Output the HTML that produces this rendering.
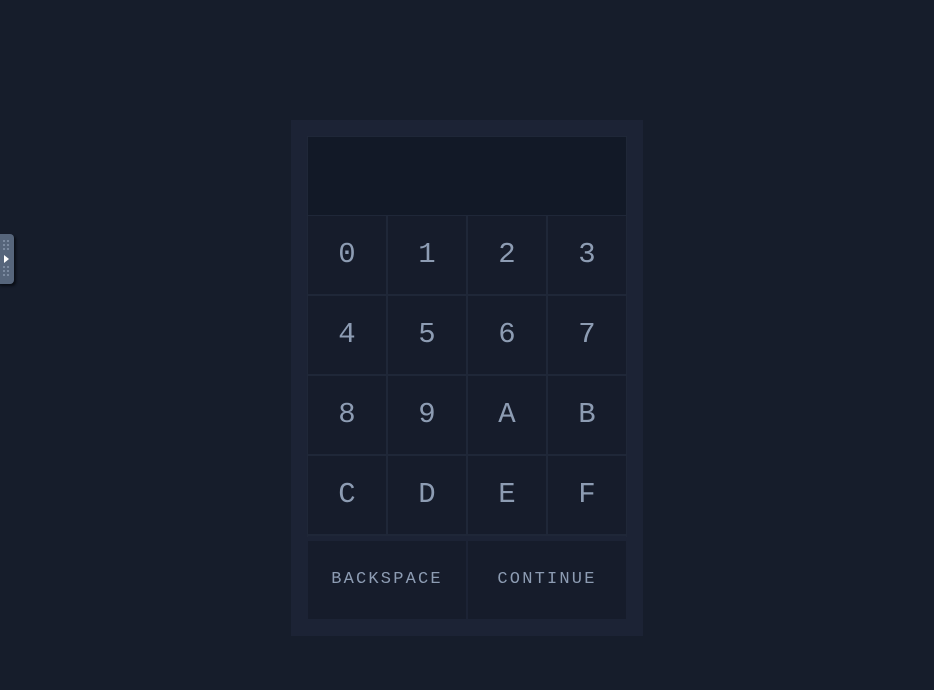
<!DOCTYPE html>
<html><head><style>
html,body{margin:0;padding:0;width:934px;height:690px;background:#161d2b;overflow:hidden;font-family:"Liberation Mono",monospace;}
.panel{position:absolute;left:291px;top:120px;width:352px;height:516px;background:#1c2335;}
.disp{position:absolute;left:307px;top:136px;width:318px;height:78px;background:#121927;border:1px solid #1f2738;}
.grid{position:absolute;left:307px;top:215px;width:320px;height:322px;background:#1f2738;}
.k{position:absolute;width:78px;height:78px;background:#161c2b;color:#8d9cb3;font-size:29px;display:flex;align-items:center;justify-content:center;padding-bottom:2px;box-sizing:border-box;}
.b{position:absolute;top:541px;height:78px;background:#161c2b;color:#8d9cb3;font-size:17px;letter-spacing:2.2px;display:flex;align-items:center;justify-content:center;padding-bottom:2px;box-sizing:border-box;}
.tab{position:absolute;left:-4px;top:234px;width:18px;height:50px;background:#56657b;border-radius:4px;box-shadow:2px 2px 2px #0a0e16;}
.dot{position:absolute;width:2px;height:2px;background:#7b8aa0;}
</style></head><body>
<div class="panel"></div>
<div class="disp"></div>
<div class="grid"></div>
<div class="k" style="left:308px;top:216px">0</div>
<div class="k" style="left:388px;top:216px">1</div>
<div class="k" style="left:468px;top:216px">2</div>
<div class="k" style="left:548px;top:216px">3</div>
<div class="k" style="left:308px;top:296px">4</div>
<div class="k" style="left:388px;top:296px">5</div>
<div class="k" style="left:468px;top:296px">6</div>
<div class="k" style="left:548px;top:296px">7</div>
<div class="k" style="left:308px;top:376px">8</div>
<div class="k" style="left:388px;top:376px">9</div>
<div class="k" style="left:468px;top:376px">A</div>
<div class="k" style="left:548px;top:376px">B</div>
<div class="k" style="left:308px;top:456px">C</div>
<div class="k" style="left:388px;top:456px">D</div>
<div class="k" style="left:468px;top:456px">E</div>
<div class="k" style="left:548px;top:456px">F</div>
<div style="position:absolute;left:308px;top:536px;width:318px;height:5px;background:#1c2335"></div>
<div class="b" style="left:308px;width:158px">BACKSPACE</div>
<div style="position:absolute;left:466px;top:541px;width:2px;height:78px;background:#1c2335"></div>
<div class="b" style="left:468px;width:158px">CONTINUE</div>
<div class="tab">
<div class="dot" style="left:7px;top:6px"></div><div class="dot" style="left:11px;top:6px"></div>
<div class="dot" style="left:7px;top:10px"></div><div class="dot" style="left:11px;top:10px"></div>
<div class="dot" style="left:7px;top:14px"></div><div class="dot" style="left:11px;top:14px"></div>
<div style="position:absolute;left:8px;top:21px;width:0;height:0;border-left:5px solid #fff;border-top:4px solid transparent;border-bottom:4px solid transparent"></div>
<div class="dot" style="left:7px;top:32px"></div><div class="dot" style="left:11px;top:32px"></div>
<div class="dot" style="left:7px;top:36px"></div><div class="dot" style="left:11px;top:36px"></div>
<div class="dot" style="left:7px;top:40px"></div><div class="dot" style="left:11px;top:40px"></div>
</div>
</body></html>
